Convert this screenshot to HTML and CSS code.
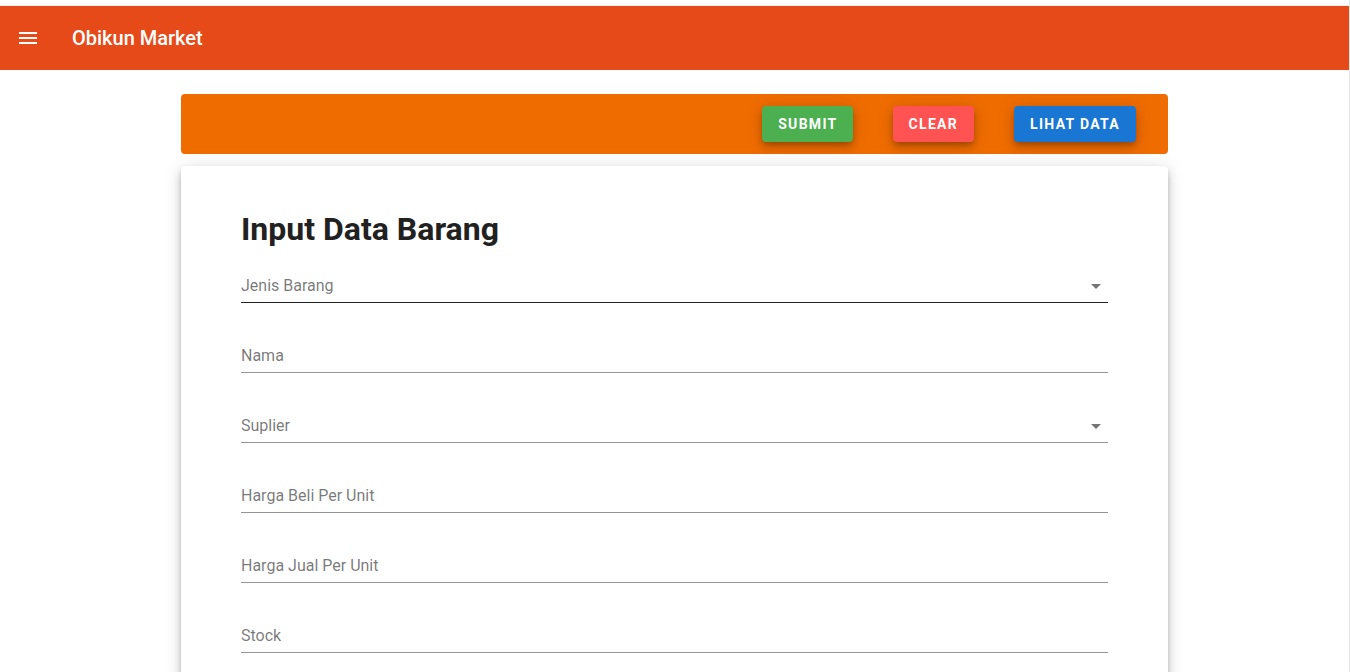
FILE: index.html
```html
<!DOCTYPE html>
<html lang="id">
<head>
<meta charset="utf-8">
<title>Obikun Market</title>
<link rel="stylesheet" href="styles.css">
</head>
<body>
<div class="app">
  <div class="topstrip"></div>
  <header class="toolbar">
    <button class="nav-icon" aria-label="menu">
      <svg viewBox="0 0 24 24" width="24" height="24"><path d="M3,6H21V8H3V6M3,11H21V13H3V11M3,16H21V18H3V16Z" fill="#fff"/></svg>
    </button>
    <div class="toolbar-title">Obikun Market</div>
  </header>
  <main class="main">
    <div class="actions">
      <button class="btn btn-green">Submit</button>
      <button class="btn btn-red">Clear</button>
      <button class="btn btn-blue">Lihat Data</button>
    </div>
    <section class="card">
      <h1 class="card-title">Input Data Barang</h1>
      <div class="form">
        <div class="field field-active"><span class="label">Jenis Barang</span><svg class="arrow" viewBox="0 0 24 24" width="24" height="24"><path d="M7,10L12,15L17,10H7Z" fill="#757575"/></svg></div>
        <div class="field"><span class="label">Nama</span></div>
        <div class="field"><span class="label">Suplier</span><svg class="arrow" viewBox="0 0 24 24" width="24" height="24"><path d="M7,10L12,15L17,10H7Z" fill="#757575"/></svg></div>
        <div class="field"><span class="label">Harga Beli Per Unit</span></div>
        <div class="field"><span class="label">Harga Jual Per Unit</span></div>
        <div class="field"><span class="label">Stock</span></div>
      </div>
    </section>
  </main>
</div>
</body>
</html>
```

FILE: styles.css
```css
* { box-sizing: border-box; }
html, body { margin: 0; padding: 0; background: #fff; }
body {
  font-family: Roboto, "Liberation Sans", Arial, sans-serif;
  color: rgba(0,0,0,0.87);
  overflow: hidden;
  height: 672px;
}
.app {
  width: 1350px;
  height: 672px;
  overflow: hidden;
  border-right: 1px solid #e6e6e6;
}
.topstrip {
  height: 6px;
  border-bottom: 1px solid #f0f0f0;
}
.toolbar {
  height: 64px;
  background: #e64a19;
  display: flex;
  align-items: center;
  padding-left: 16px;
}
.nav-icon {
  width: 24px;
  height: 24px;
  padding: 0;
  border: 0;
  background: none;
  display: flex;
}
.toolbar-title {
  margin-left: 32px;
  color: #fff;
  font-size: 20px;
  font-weight: 500;
}
.main {
  width: 987px;
  margin: 24px 0 0 181px;
}
.actions {
  height: 60px;
  background: #ef6c00;
  border-radius: 4px;
  display: flex;
  justify-content: flex-end;
  align-items: center;
  gap: 40px;
  padding-right: 32px;
}
.btn {
  height: 36px;
  padding: 0 16px;
  border: 0;
  border-radius: 4px;
  color: #fff;
  font-family: Roboto, "Liberation Sans", Arial, sans-serif;
  font-size: 14px;
  font-weight: 700;
  text-transform: uppercase;
  letter-spacing: 1.3px;
  box-shadow: 0 3px 5px -1px rgba(0,0,0,.2), 0 6px 10px 0 rgba(0,0,0,.14), 0 1px 18px 0 rgba(0,0,0,.12);
}
.btn-green { background: #4caf50; padding-right: 15px; }
.btn-red { background: #ff5252; }
.btn-blue { background: #1976d2; }
.card {
  margin-top: 12px;
  height: 520px;
  background: #fff;
  border-radius: 4px;
  box-shadow: 0 3px 5px -1px rgba(0,0,0,.2), 0 6px 10px 0 rgba(0,0,0,.14), 0 1px 18px 0 rgba(0,0,0,.12);
  padding: 43px 60px 0;
}
.card-title {
  margin: 0;
  font-size: 32px;
  line-height: 40px;
  font-weight: 700;
  color: #212121;
}
.form {
  margin-top: 25px;
  display: flex;
  flex-direction: column;
  gap: 41px;
}
.field {
  display: flex;
  align-items: center;
  justify-content: space-between;
  padding-bottom: 4px;
  border-bottom: 1px solid rgba(0,0,0,0.42);
}
.field-active { border-bottom-color: rgba(0,0,0,0.87); }
.label {
  font-size: 16px;
  line-height: 24px;
  color: rgba(0,0,0,0.54);
}
.arrow { display: block; }
```
